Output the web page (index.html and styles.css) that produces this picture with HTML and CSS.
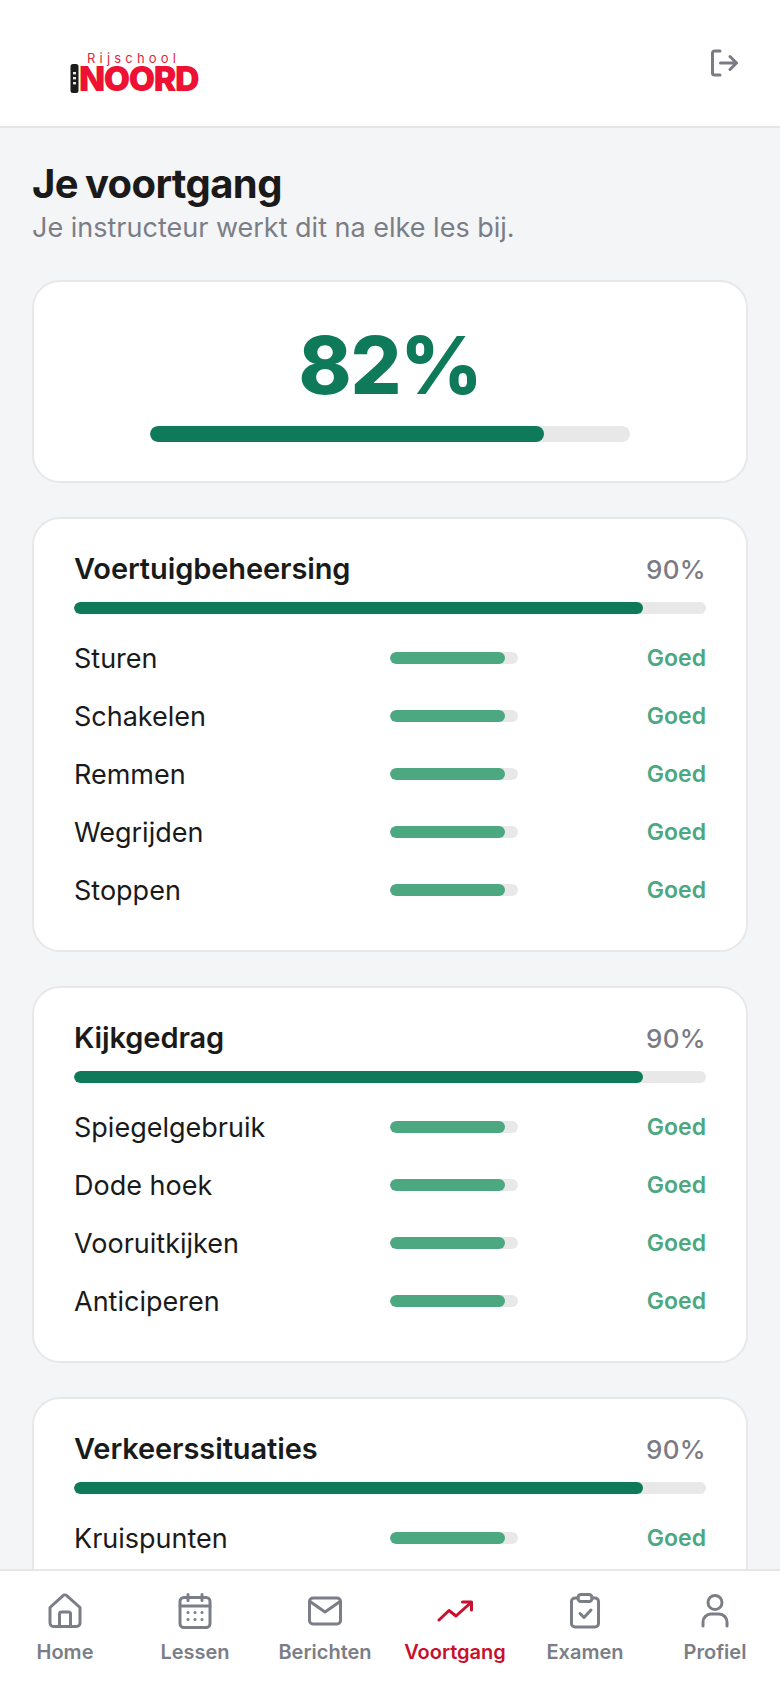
FILE: index.html
```html
<!DOCTYPE html>
<html lang="nl">
<head>
<meta charset="utf-8">
<title>Voortgang</title>
<link rel="stylesheet" href="styles.css">
</head>
<body>
<div class="app">
  <header class="topbar">
    <div class="logo">
      <svg class="logo-tower" viewBox="0 0 8 29" aria-hidden="true"><rect width="8" height="29" rx="2.500" fill="#1c1c1e"/><g fill="#e8e8e8"><rect x="2.500" y="8" width="3" height="2.400"/><rect x="2.500" y="13" width="3" height="2.400"/><rect x="2.500" y="18" width="3" height="2.400"/></g></svg>
      <div class="logo-words">
        <span class="logo-small">Rijschool</span>
        <span class="logo-big">NOORD</span>
      </div>
    </div>
    <svg class="logout" viewBox="0 0 28 28" fill="none" stroke="currentColor" stroke-width="3" stroke-linecap="round" stroke-linejoin="round" aria-hidden="true"><path d="M10 2H4.500A2 2 0 0 0 2.500 4v20a2 2 0 0 0 2 2H10"/><path d="M10.500 14h16M20 7.500l6.500 6.500-6.500 6.500"/></svg>
  </header>

  <main class="content">
    <h1 class="title">Je voortgang</h1>
    <p class="subtitle">Je instructeur werkt dit na elke les bij.</p>

    <section class="card overall">
      <div class="overall-value">82%</div>
      <div class="track track-overall"><div class="fill fill-dark" style="width:82%"></div></div>
    </section>

    <section class="card group">
      <div class="group-head"><h2 class="group-title">Voertuigbeheersing</h2><span class="group-pct">90%</span></div>
      <div class="track track-group"><div class="fill fill-dark" style="width:90%"></div></div>
      <div class="rows">
        <div class="row"><span class="row-label">Sturen</span><div class="track track-row"><div class="fill fill-light" style="width:90%"></div></div><span class="row-status">Goed</span></div>
        <div class="row"><span class="row-label">Schakelen</span><div class="track track-row"><div class="fill fill-light" style="width:90%"></div></div><span class="row-status">Goed</span></div>
        <div class="row"><span class="row-label">Remmen</span><div class="track track-row"><div class="fill fill-light" style="width:90%"></div></div><span class="row-status">Goed</span></div>
        <div class="row"><span class="row-label">Wegrijden</span><div class="track track-row"><div class="fill fill-light" style="width:90%"></div></div><span class="row-status">Goed</span></div>
        <div class="row"><span class="row-label">Stoppen</span><div class="track track-row"><div class="fill fill-light" style="width:90%"></div></div><span class="row-status">Goed</span></div>
      </div>
    </section>

    <section class="card group">
      <div class="group-head"><h2 class="group-title">Kijkgedrag</h2><span class="group-pct">90%</span></div>
      <div class="track track-group"><div class="fill fill-dark" style="width:90%"></div></div>
      <div class="rows">
        <div class="row"><span class="row-label">Spiegelgebruik</span><div class="track track-row"><div class="fill fill-light" style="width:90%"></div></div><span class="row-status">Goed</span></div>
        <div class="row"><span class="row-label">Dode hoek</span><div class="track track-row"><div class="fill fill-light" style="width:90%"></div></div><span class="row-status">Goed</span></div>
        <div class="row"><span class="row-label">Vooruitkijken</span><div class="track track-row"><div class="fill fill-light" style="width:90%"></div></div><span class="row-status">Goed</span></div>
        <div class="row"><span class="row-label">Anticiperen</span><div class="track track-row"><div class="fill fill-light" style="width:90%"></div></div><span class="row-status">Goed</span></div>
      </div>
    </section>

    <section class="card group">
      <div class="group-head"><h2 class="group-title">Verkeerssituaties</h2><span class="group-pct">90%</span></div>
      <div class="track track-group"><div class="fill fill-dark" style="width:90%"></div></div>
      <div class="rows">
        <div class="row"><span class="row-label">Kruispunten</span><div class="track track-row"><div class="fill fill-light" style="width:90%"></div></div><span class="row-status">Goed</span></div>
      </div>
    </section>
  </main>

  <nav class="tabbar">
    <div class="tab">
      <svg class="tab-icon" viewBox="0 0 36 36" fill="none" stroke="currentColor" stroke-width="3" stroke-linecap="round" stroke-linejoin="round" aria-hidden="true"><path d="M3 14.500 15.800 2.800a3 3 0 0 1 4.200 0L33 14.500V30a3.500 3.500 0 0 1-3.500 3.500h-23A3.500 3.500 0 0 1 3 30z"/><path d="M12.500 33.500V21a2 2 0 0 1 2-2h7a2 2 0 0 1 2 2v12.500"/></svg>
      <span class="tab-label">Home</span>
    </div>
    <div class="tab">
      <svg class="tab-icon" viewBox="0 0 36 36" fill="none" stroke="currentColor" stroke-width="3" stroke-linecap="round" stroke-linejoin="round" aria-hidden="true"><rect x="3" y="4.500" width="30" height="30" rx="4"/><path d="M3 13h30M11 1.500v6M25 1.500v6"/><g fill="currentColor" stroke="none"><circle cx="11" cy="19.500" r="1.500"/><circle cx="18" cy="19.500" r="1.500"/><circle cx="25" cy="19.500" r="1.500"/><circle cx="11" cy="26.500" r="1.500"/><circle cx="18" cy="26.500" r="1.500"/><circle cx="25" cy="26.500" r="1.500"/></g></svg>
      <span class="tab-label">Lessen</span>
    </div>
    <div class="tab">
      <svg class="tab-icon" viewBox="0 0 36 36" fill="none" stroke="currentColor" stroke-width="3" stroke-linecap="round" stroke-linejoin="round" aria-hidden="true"><rect x="2.500" y="5" width="31" height="26" rx="3.500"/><path d="M3 8.500 18 19 33 8.500"/></svg>
      <span class="tab-label">Berichten</span>
    </div>
    <div class="tab tab-active">
      <svg class="tab-icon" viewBox="0 0 36 36" fill="none" stroke="currentColor" stroke-width="3" stroke-linecap="round" stroke-linejoin="round" aria-hidden="true"><path d="M2 27 12 17.500l7 5.500L34 9.500"/><path d="M25.500 9H34.500v8"/></svg>
      <span class="tab-label">Voortgang</span>
    </div>
    <div class="tab">
      <svg class="tab-icon" viewBox="0 0 36 36" fill="none" stroke="currentColor" stroke-width="3" stroke-linecap="round" stroke-linejoin="round" aria-hidden="true"><path d="M11 5H8a3.500 3.500 0 0 0-3.500 3.500v22A3.500 3.500 0 0 0 8 34h20a3.500 3.500 0 0 0 3.500-3.500v-22A3.500 3.500 0 0 0 28 5h-3"/><rect x="11" y="1.500" width="14" height="7" rx="3"/><path d="m13 20.500 4 4 7-7.500"/></svg>
      <span class="tab-label">Examen</span>
    </div>
    <div class="tab">
      <svg class="tab-icon" viewBox="0 0 36 36" fill="none" stroke="currentColor" stroke-width="3" stroke-linecap="round" stroke-linejoin="round" aria-hidden="true"><circle cx="18" cy="9.500" r="7"/><path d="M6 33v-4a8 8 0 0 1 8-8h8a8 8 0 0 1 8 8v4"/></svg>
      <span class="tab-label">Profiel</span>
    </div>
  </nav>
</div>
</body>
</html>
```
FILE: styles.css
```css
* { box-sizing: border-box; margin: 0; padding: 0; }
html, body { height: 100%; }
body {
  font-family: Inter, "Liberation Sans", sans-serif;
  color: #1a1a1a;
  background: #f4f5f7;
  overflow: hidden;
}
.app { display: flex; flex-direction: column; height: 1688px; }

.topbar {
  flex: 0 0 128px;
  display: flex;
  align-items: center;
  justify-content: space-between;
  background: #fff;
  border-bottom: 2px solid #e6e6e8;
  padding: 0 42px 0 70px;
}
.logo { display: flex; align-items: flex-end; height: 42px; margin-top: 18px; }
.logo-tower { width: 9px; height: 29px; display: block; }
.logo-words { display: flex; flex-direction: column; margin-left: 0; }
.logo-small {
  font-size: 13px;
  line-height: 14px;
  color: #e32636;
  letter-spacing: 4.2px;
  margin-left: 8px;
}
.logo-big {
  font-size: 34px;
  line-height: 28px;
  font-weight: 900;
  color: #ee1133;
  letter-spacing: -1.4px;
}
.logout { width: 28px; height: 28px; color: #7b7b84; }

.content { flex: 1; min-height: 0; overflow: hidden; padding: 32px 32px 0; }
.title { font-size: 40px; line-height: 48px; font-weight: 700; letter-spacing: -0.6px; word-spacing: -2px; color: #1a1a1a; }
.subtitle { font-size: 27px; line-height: 32px; color: #7b7e87; margin-top: 4px; }

.card {
  background: #fff;
  border: 2px solid #e8e8ea;
  border-radius: 28px;
  margin-top: 34px;
}
.overall { margin-top: 36px; height: 203px; padding-top: 35px; display: flex; flex-direction: column; align-items: center; }
.overall-value { font-size: 80px; line-height: 96px; font-weight: 800; color: #0f7a5a; letter-spacing: -1.2px; }
.track { background: #e8e8e8; border-radius: 999px; overflow: hidden; }
.fill { height: 100%; border-radius: 999px; }
.fill-dark { background: #0f7a5a; }
.fill-light { background: #4ca880; }
.track-overall { width: 480px; height: 16px; margin-top: 13px; }

.group { padding: 32px 40px 31px; }
.group-head { display: flex; justify-content: space-between; align-items: center; height: 36px; }
.group-title { font-size: 29px; line-height: 36px; font-weight: 600; letter-spacing: -0.1px; color: #1a1a1a; }
.group-pct { font-size: 26px; font-weight: 500; letter-spacing: 0.3px; color: #7b7b84; }
.track-group { height: 12px; margin-top: 15px; }
.rows { margin-top: 15px; }
.row { display: grid; grid-template-columns: 1fr 128px 188px; align-items: center; height: 58px; }
.row-label { font-size: 27px; color: #1a1a1a; }
.track-row { height: 12px; }
.row-status { font-size: 23px; font-weight: 600; color: #4ca880; text-align: right; }

.tabbar {
  flex: 0 0 119px;
  display: grid;
  grid-template-columns: repeat(6, 1fr);
  background: #fff;
  border-top: 2px solid #e6e6e8;
  padding-top: 22px;
}
.tab { display: flex; flex-direction: column; align-items: center; gap: 11px; color: #7b7e87; }
.tab-active { color: #c8102e; }
.tab-icon { width: 36px; height: 36px; display: block; }
.tab-label { font-size: 20px; line-height: 24px; font-weight: 600; white-space: nowrap; }
```
